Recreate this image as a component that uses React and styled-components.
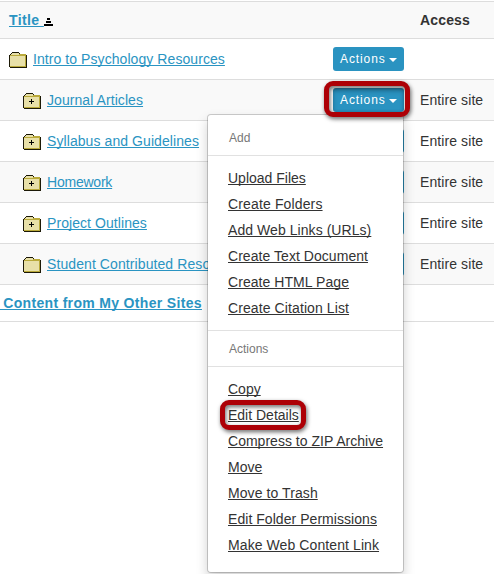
import React from "react";
import styled, { createGlobalStyle } from "styled-components";

const Global = createGlobalStyle`
  * { box-sizing: border-box; }
  html, body { margin: 0; height: 574px; overflow: hidden; background: #fff; }
  body { font: 14px/20px "Liberation Sans", Arial, sans-serif; color: #333; }
`;

const Page = styled.main`
  position: relative;
  width: 494px;
  height: 574px;
  overflow: hidden;
  padding-top: 1px;
`;

const Row = styled.div`
  display: grid;
  grid-template-columns: 333px 87px 1fr;
  align-items: center;
  height: ${(p) => p.$height || 41}px;
  border-top: 1px solid #ddd;
  background: ${(p) => (p.$striped ? "#f9f9f9" : "#fff")};
`;

const TitleCell = styled.div`
  display: flex;
  align-items: center;
  padding-left: ${(p) => p.$indent}px;
  white-space: nowrap;
`;

const Link = styled.a`
  color: #2a94c2;
  font-weight: ${(p) => (p.$bold ? "bold" : "normal")};
  letter-spacing: ${(p) => p.$spacing || 0}px;
  text-decoration: underline;
  text-decoration-thickness: 1px;
  text-decoration-skip-ink: none;
  text-underline-offset: 1px;
  white-space: pre;
`;

const Access = styled.span`
  letter-spacing: ${(p) => (p.$bold ? 0.15 : 0.09)}px;
  font-weight: ${(p) => (p.$bold ? "bold" : "normal")};
`;

const FolderIcon = styled.svg`
  flex: none;
  width: 18px;
  height: 16px;
  margin: 2px 6px 0 0;
`;

const SortIcon = styled.svg`
  width: 9px;
  height: 8px;
  margin: 3px 0 0;
`;

const ActionButton = styled.button`
  display: flex;
  align-items: center;
  width: 71px;
  height: 24px;
  padding: 0 0 0 7px;
  border: 0;
  border-radius: 3px;
  background: #2a93c1;
  color: #fff;
  font: 12px/24px "Liberation Sans", Arial, sans-serif;
  letter-spacing: 0.9px;
  box-shadow: ${(p) => (p.$open ? "inset 0 3px 5px rgba(0,0,0,.2)" : "none")};
`;

const Caret = styled.i`
  border: 4px solid transparent;
  border-top-color: #fff;
  border-bottom: 0;
  margin: 2px 0 0 3px;
`;

const Footer = styled.div`
  display: flex;
  align-items: center;
  height: 38px;
  border: solid #ddd;
  border-width: 1px 0;
`;

const FooterLink = styled(Link)`
  margin-left: -1px;
`;

const Menu = styled.div`
  position: absolute;
  left: 207px;
  top: 114px;
  width: 197px;
  height: 459px;
  border: 1px solid rgba(0, 0, 0, 0.18);
  border-radius: 4px;
  background: #fff;
  background-clip: padding-box;
  box-shadow: 0 6px 12px rgba(0, 0, 0, 0.175);
`;

const MenuHeading = styled.div`
  height: ${(p) => p.$height}px;
  padding: ${(p) => p.$top}px 0 0 21px;
  border: solid #e1e1e1;
  border-width: ${(p) => (p.$divided ? 1 : 0)}px 0 1px;
  color: #777;
  font-size: 12px;
  line-height: 16px;
`;

const MenuList = styled.ul`
  margin: 0;
  padding: 9px 0 9px 20px;
  list-style: none;
`;

const MenuItem = styled.li`
  height: 26px;
  line-height: 26px;
  white-space: nowrap;
`;

const MenuLink = styled(Link)`
  color: #333;
`;

const Callout = styled.div`
  position: absolute;
  left: ${(p) => p.$x}px;
  top: ${(p) => p.$y}px;
  width: ${(p) => p.$w}px;
  height: ${(p) => p.$h}px;
  border: 5px solid #ad0006;
  border-radius: 9px;
  filter: drop-shadow(1px 2px 2px rgba(0, 0, 0, 0.6));
  pointer-events: none;
`;

function Folder({ plus }) {
  return (
    <FolderIcon viewBox="0 0 18 16" shapeRendering="crispEdges">
      <path d="M3 0h7v1H3zM2 1h1v1H2zM10 1h1v1h-1zM0 3h1v12H0zM1 2h1v1H1zM17 3h1v13H1v-1h16z" fill="#1c1907" />
      <path d="M1 3h1V2h1V1h7v1h7v13H1z" fill="#b9a93a" />
      <path d="M3 1h7v1H3zM2 2h8v1H2zM1 4h15v10H1z" fill="#e8e0a8" />
      {plus && <path d="M8 6h1v2h2v1H9v2H8V9H6V8h2z" fill="#000" />}
    </FolderIcon>
  );
}

const rows = [
  { title: "Intro to Psychology Resources", root: true, spacing: 0.07 },
  { title: "Journal Articles", plus: true, open: true, spacing: 0.07 },
  { title: "Syllabus and Guidelines", plus: true, spacing: 0.08 },
  { title: "Homework", plus: true, spacing: -0.22 },
  { title: "Project Outlines", plus: true, spacing: 0.07 },
  { title: "Student Contributed Resources", spacing: 0.09 },
];

const addItems = [
  ["Upload Files", 0],
  ["Create Folders", 0.14],
  ["Add Web Links (URLs)", 0.06],
  ["Create Text Document", 0.05],
  ["Create HTML Page", 0.06],
  ["Create Citation List", 0.1],
];

const actionItems = [
  ["Copy", 0],
  ["Edit Details", 0],
  ["Compress to ZIP Archive", 0.02],
  ["Move", 0],
  ["Move to Trash", 0.08],
  ["Edit Folder Permissions", 0.05],
  ["Make Web Content Link", 0.09],
];

function Items({ items }) {
  return (
    <MenuList>
      {items.map(([label, spacing]) => (
        <MenuItem key={label}>
          <MenuLink $spacing={spacing}>{label}</MenuLink>
        </MenuItem>
      ))}
    </MenuList>
  );
}

export default function App() {
  return (
    <Page>
      <Global />
      <Row $height={37} $striped>
        <TitleCell $indent={9}>
          <Link $bold $spacing={0.4}>{"Title "}</Link>
          <SortIcon viewBox="0 0 9 8" shapeRendering="crispEdges">
            <path d="M3 0h3v2H3zM2 3h5v2H2zM0 6h9v2H0z" />
          </SortIcon>
        </TitleCell>
        <span />
        <Access $bold>Access</Access>
      </Row>
      {rows.map((r, i) => (
        <Row key={r.title} $striped={i % 2 === 1}>
          <TitleCell $indent={r.root ? 9 : 23}>
            <Folder plus={r.plus} />
            <Link $spacing={r.spacing}>{r.title}</Link>
          </TitleCell>
          <ActionButton $open={r.open}>
            Actions
            <Caret />
          </ActionButton>
          {!r.root && <Access>Entire site</Access>}
        </Row>
      ))}
      <Footer>
        <FooterLink $bold $spacing={0.33}>{" Content from My Other Sites"}</FooterLink>
      </Footer>
      <Menu>
        <MenuHeading $height={41} $top={15}>Add</MenuHeading>
        <Items items={addItems} />
        <MenuHeading $height={37} $top={10} $divided>Actions</MenuHeading>
        <Items items={actionItems} />
      </Menu>
      <Callout $x={324} $y={81} $w={86} $h={36} />
      <Callout $x={220} $y={400} $w={86} $h={30} />
    </Page>
  );
}
